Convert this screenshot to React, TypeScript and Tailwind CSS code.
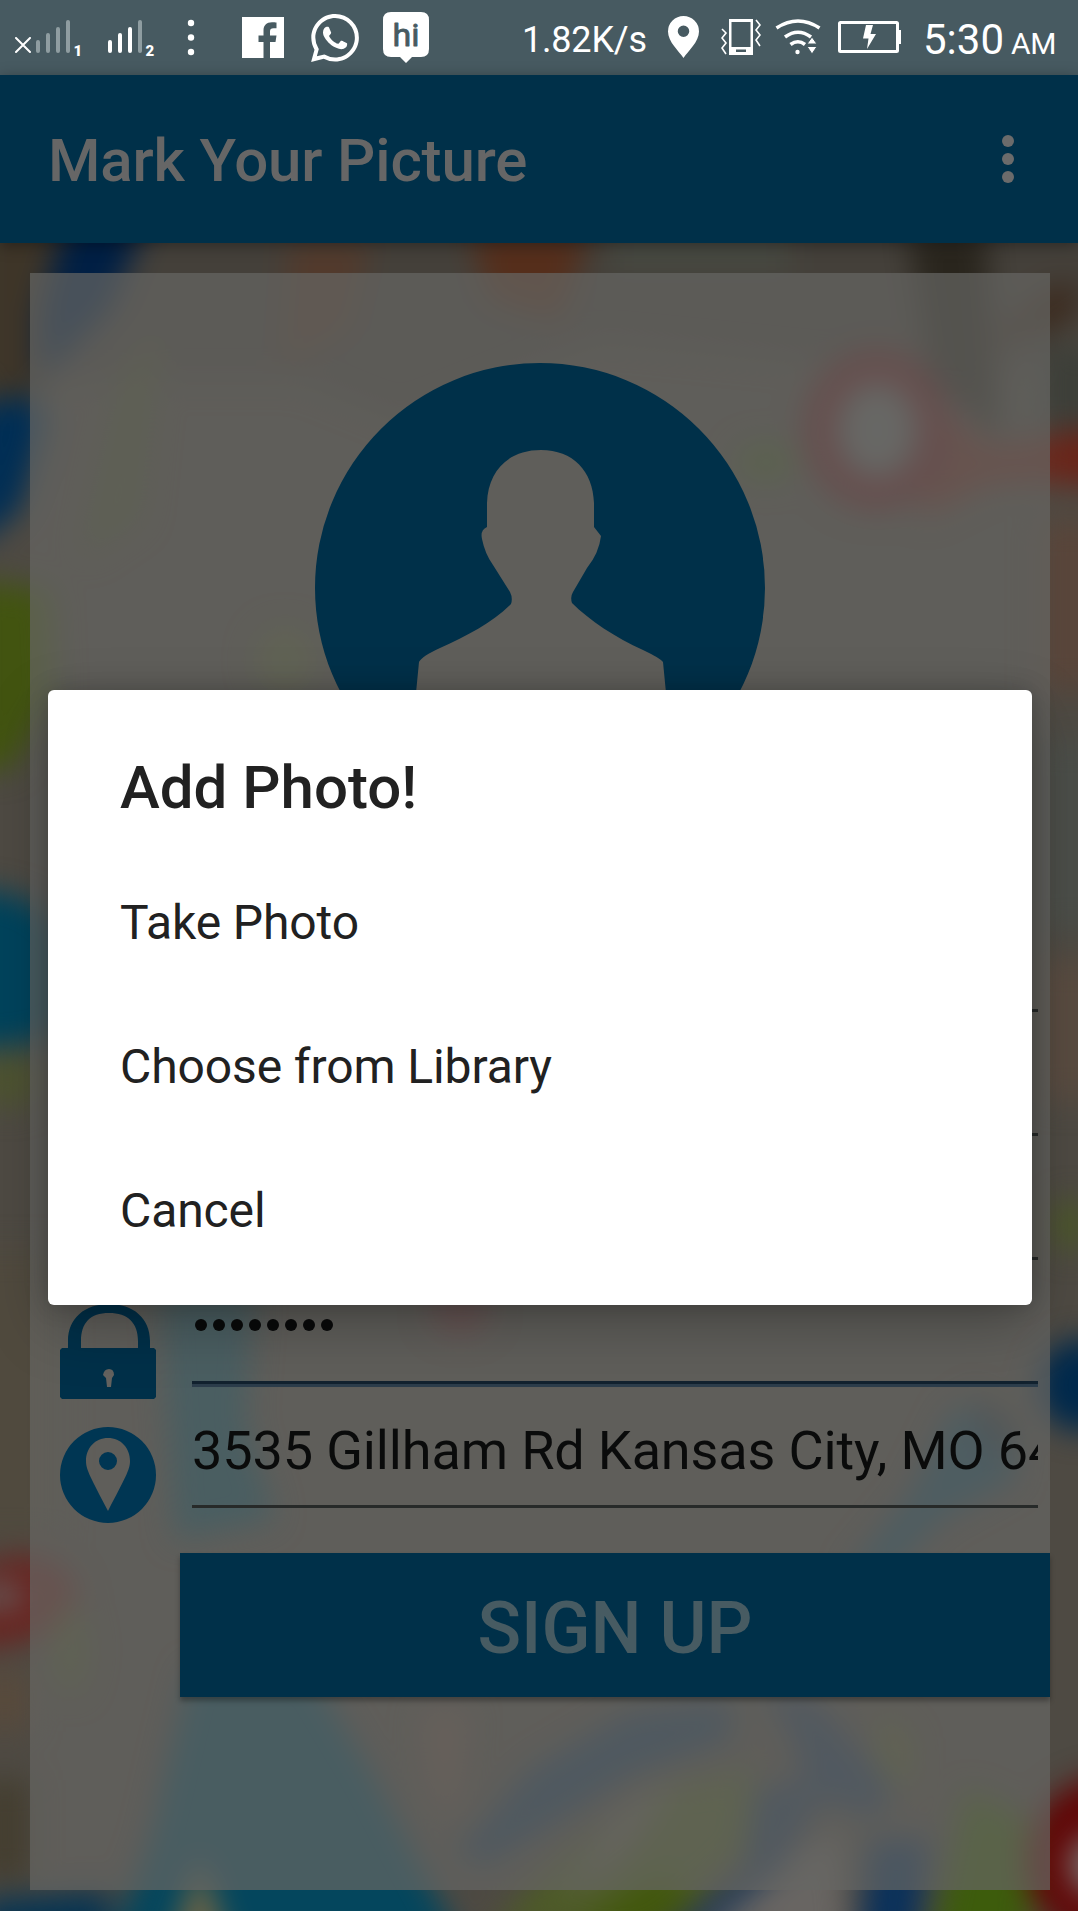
import React from "react";

function MapBackdrop() {
  return (
    <svg className="absolute inset-0 h-full w-full" viewBox="0 0 1078 1911" preserveAspectRatio="none">
      <defs>
        <filter id="soft" x="-20%" y="-20%" width="140%" height="140%" colorInterpolationFilters="sRGB">
          <feGaussianBlur stdDeviation="15" />
        </filter>
      </defs>
      <rect width="1078" height="1911" fill="#4e4a43" />
      <g filter="url(#soft)">
        <path d="M-40 200H1120V300L1000 380L600 340L400 420L300 380H-40Z" fill="#44403a" />
        <path d="M-20 220H60V350L40 400H-20Z" fill="#3e3528" />
        <path d="M72 200H155L110 310L40 380L40 310Z" fill="#001f44" />
        <path d="M-30 405L34 395L48 420L20 510L-30 550Z" fill="#002e55" />
        <path d="M120 380L160 330L140 520L80 560Z" fill="#4b5030" />
        <path d="M-30 580L50 590L55 700L10 770L-30 770Z" fill="#425410" />
        <path d="M290 240H370L350 330L280 370Z" fill="#523a2c" />
        <path d="M470 230H590L560 320L490 300Z" fill="#552e1b" />
        <path d="M610 230H790V270H610Z" fill="#474a42" />
        <path d="M908 230H985L1000 440L930 380Z" fill="#29251d" />
        <path d="M1078 280V320L980 350L1040 290Z" fill="#3d2c20" />
        <path d="M1040 345H1100V430H1040Z" fill="#3d3f39" />
        <path d="M940 405L990 445L1100 430V480L990 485L920 520Z" fill="#6a2a20" />
        <path d="M1058 430H1110V485H1058Z" fill="#6a2418" />
        <ellipse cx="877" cy="430" rx="57" ry="64" fill="#686a68" stroke="#65191c" strokeWidth="34" />
        <ellipse cx="766" cy="462" rx="30" ry="19" fill="#41581f" />
        <ellipse cx="285" cy="660" rx="30" ry="34" fill="#525a30" />
        <path d="M1040 520H1100V690H1040Z" fill="#59453a" />
        <path d="M1040 740H1100V930H1040Z" fill="#4b4e49" />
        <path d="M-40 890Q60 885 80 970T-40 1045Z" fill="#00435c" />
        <ellipse cx="8" cy="1080" rx="35" ry="28" fill="#4d5330" />
        <path d="M1040 960H1100V1100H1040Z" fill="#594b40" />
        <ellipse cx="1070" cy="1225" rx="18" ry="27" fill="#4b5728" />
        <path d="M-40 1250H60V1540H-40Z" fill="#504a3e" />
        <ellipse cx="460" cy="1310" rx="30" ry="24" fill="#69272a" />
        <path d="M160 1290H255L245 1420L275 1520L175 1540Z" fill="#074a5c" />
        <circle cx="1082" cy="1385" r="46" fill="#00294c" />
        <path d="M955 1405L1015 1440V1480L940 1520L890 1575L845 1575L910 1495Z" fill="#14475d" />
        <path d="M970 1390L1018 1430L990 1460Z" fill="#1c2e3b" />
        <path d="M-30 1570Q50 1535 75 1585T-30 1650Z" fill="#692420" />
        <ellipse cx="0" cy="1596" rx="25" ry="12" fill="#62605f" />
        <ellipse cx="70" cy="1650" rx="17" ry="45" fill="#4f592e" />
        <path d="M-20 1670H30V1730H-20Z" fill="#584a3c" />
        <path d="M-20 1780H30V1880H-20Z" fill="#443e30" />
        <path d="M190 1670H310L370 1770L470 1960H105L150 1840Z" fill="#04465d" />
        <path d="M-20 1900L110 1890V1950H-20Z" fill="#063452" />
        <path d="M200 1855L230 1950H170Z" fill="#706444" />
        <path d="M420 1710H470L455 1820L430 1790Z" fill="#665044" />
        <path d="M732 1700L730 1740L630 1775L560 1820L485 1865L455 1855L530 1770L630 1712Z" fill="#1a3a58" />
        <path d="M755 1770L745 1850L660 1930H490L560 1860L650 1790Z" fill="#4d5b26" />
        <path d="M680 1780L620 1860L560 1900L620 1810Z" fill="#626052" />
        <path d="M655 1870L700 1900L650 1940H570Z" fill="#42580c" />
        <path d="M760 1690L815 1700L890 1785L880 1820L820 1800L790 1850L740 1940H660L745 1870L755 1790L805 1780L790 1730Z" fill="#203a58" />
        <path d="M700 1940L800 1850L840 1830L850 1950Z" fill="#686562" />
        <path d="M870 1840H930L915 1950H860Z" fill="#0a315b" />
        <path d="M880 1710L910 1740V1790L880 1770Z" fill="#535b28" />
        <path d="M965 1790L1030 1820V1950H930Z" fill="#3d5c0c" />
        <circle cx="1110" cy="1860" r="84" fill="#610606" />
        <ellipse cx="1094" cy="1865" rx="25" ry="30" fill="#77706e" />
      </g>
    </svg>
  );
}

function SignalBars({ active, sim }: { active: boolean; sim: string }) {
  const on = active ? "#ffffff" : "#8f9da1";
  return (
    <svg className="h-[46px] w-[52px] shrink-0" viewBox="0 0 52 46">
      <g strokeWidth="4" strokeLinecap="round">
        <path d="M2 24V33M12 17V33M22 11V33" stroke={on} />
        <path d="M32 4V33" stroke="#8f9da1" />
      </g>
      <text x="37.500" y="38" fill="#fff" fontFamily="Roboto" fontWeight="900" fontSize="15">{sim}</text>
    </svg>
  );
}

function StatusBar() {
  return (
    <div className="flex h-[75px] items-start bg-[#475a61] pl-[15px] text-white">
      <svg className="mt-[37px] h-[17px] w-[17px] shrink-0" viewBox="0 0 17 17" stroke="#fff" strokeWidth="2" strokeLinecap="round">
        <path d="M1 1L15 15M15 1L1 15" />
      </svg>
      <div className="mt-[18px] ml-[4px]"><SignalBars active={false} sim="1" /></div>
      <div className="mt-[18px] ml-[20px]"><SignalBars active sim="2" /></div>
      <svg className="mt-[18px] ml-[27px] h-[40px] w-[8px] shrink-0" viewBox="0 0 8 40" fill="#fff">
        <circle cx="4" cy="5" r="3.2" /><circle cx="4" cy="19.5" r="3.2" /><circle cx="4" cy="34" r="3.2" />
      </svg>
      <svg className="mt-[17px] ml-[47px] h-[41px] w-[42px] shrink-0" viewBox="0 0 42 41">
        <path fill="#fff" d="M0 0H42V41H28V25H33.5L34.5 18.500H28V14.500C28 12.500 29 11.300 31.500 11.300H34.500V5.600C33.500 5.400 31.800 5.300 30 5.300C24.500 5.300 21.500 8.500 21.500 13.500V18.500H16.500V25H21.500V41H0Z" />
      </svg>
      <svg className="mt-[14px] ml-[27px] h-[48px] w-[48px] shrink-0" viewBox="0 0 24 24" fill="#fff">
        <path d="M17.472 14.382c-.297-.149-1.758-.867-2.03-.967-.273-.099-.471-.148-.67.15-.197.297-.767.966-.94 1.164-.173.199-.347.223-.644.075-.297-.15-1.255-.463-2.39-1.475-.883-.788-1.480-1.761-1.653-2.059-.173-.297-.018-.458.130-.606.134-.133.298-.347.446-.520.149-.174.198-.298.298-.497.099-.198.050-.371-.025-.520-.075-.149-.669-1.612-.916-2.207-.242-.579-.487-.500-.669-.510-.173-.008-.371-.010-.570-.010-.198 0-.520.074-.792.372-.272.297-1.040 1.016-1.040 2.479 0 1.462 1.065 2.875 1.213 3.074.149.198 2.096 3.200 5.077 4.487.709.306 1.262.489 1.694.625.712.227 1.360.195 1.871.118.571-.085 1.758-.719 2.006-1.413.248-.694.248-1.289.173-1.413-.074-.124-.272-.198-.570-.347M12.050 21.785h-.004a9.870 9.870 0 0 1-5.031-1.378l-.361-.214-3.741.982.998-3.648-.235-.374a9.860 9.860 0 0 1-1.510-5.260c.001-5.450 4.436-9.884 9.888-9.884a9.890 9.890 0 0 1 9.884 9.890c-.003 5.450-4.437 9.886-9.888 9.886m8.413-18.297A11.815 11.815 0 0 0 12.050 0C5.495 0 .160 5.335.157 11.892c0 2.096.547 4.142 1.588 5.945L.057 24l6.305-1.654a11.882 11.882 0 0 0 5.683 1.448h.005c6.554 0 11.890-5.335 11.893-11.893a11.821 11.821 0 0 0-3.480-8.413Z" />
      </svg>
      <svg className="mt-[12px] ml-[24px] h-[51px] w-[46px] shrink-0" viewBox="0 0 46 51">
        <path fill="#fff" d="M8 0H38Q46 0 46 8V37Q46 45 38 45H29L23 51L17 45H8Q0 45 0 37V8Q0 0 8 0Z" />
        <text x="9.500" y="34" fill="#475a61" stroke="#475a61" strokeWidth="0.800" strokeLinejoin="round" fontFamily="Roboto" fontWeight="400" fontSize="32" textLength="27" lengthAdjust="spacingAndGlyphs">hi</text>
      </svg>
      <span className="mt-[19px] ml-[93px] w-[126px] text-[36px] leading-[42px] tracking-[-0.2px] whitespace-nowrap">1.82K/s</span>
      <svg className="mt-[16px] ml-[20px] h-[42px] w-[31px] shrink-0" viewBox="0 0 31 42">
        <path fill="#fff" fillRule="evenodd" d="M15.500 0A15.500 15.500 0 0 1 31 15.500C31 26 20 35 15.500 42C11 35 0 26 0 15.500A15.500 15.500 0 0 1 15.500 0ZM15.500 9.500A5.700 5.700 0 1 0 15.500 21A5.700 5.700 0 1 0 15.500 9.500Z" />
      </svg>
      <svg className="mt-[18px] ml-[22px] h-[38px] w-[40px] shrink-0" viewBox="0 0 40 38">
        <path fill="#fff" fillRule="evenodd" d="M8 1H32V37H8ZM10.500 4V29H29.500V4ZM15 31.500V34H25V31.500Z" />
        <path fill="none" stroke="#fff" strokeWidth="1.600" d="M1 11L5 15L1 20L5 25L1 30L5 36M35 2L39 7L35 12L39 17L35 22L39 28" />
      </svg>
      <svg className="mt-[19px] ml-[14px] h-[36px] w-[47px] shrink-0" viewBox="0 0 47 36" fill="none" stroke="#fff" strokeWidth="3.600">
        <path d="M1.500 9Q23 -5 44.500 9M10 18Q23 8.500 36 18M15.500 25.500Q23 20 30 25.500" />
        <circle cx="22.500" cy="33" r="2.200" fill="#fff" stroke="none" />
        <path fill="#fff" stroke="#475a61" strokeWidth="1" d="M32 25L37 18L42 25ZM32 27.500H42L37 35Z" />
      </svg>
      <svg className="mt-[21px] ml-[16px] h-[32px] w-[63px] shrink-0" viewBox="0 0 63 32">
        <rect x="1.500" y="1.500" width="58" height="29" rx="1" fill="none" stroke="#fff" strokeWidth="3" />
        <path fill="#fff" d="M60 9H63V23H60ZM28 4H35L32.500 13H38L29 28L30.500 17.500H25Z" />
      </svg>
      <span className="mt-[15px] ml-[22px] text-[42px] leading-[50px] whitespace-nowrap">5:30</span>
      <span className="mt-[26px] ml-[7px] text-[30px] leading-[35px] tracking-[-0.3px] whitespace-nowrap">AM</span>
    </div>
  );
}

function AppBar() {
  return (
    <header className="relative flex h-[168px] items-center justify-between bg-[#003049] pr-[64px] pl-[48px] shadow-[0_3px_14px_rgba(0,0,0,0.35)]">
      <h1 className="pt-1 text-[60px] leading-[70px] font-medium tracking-[-0.14px] text-[#666666]">Mark Your Picture</h1>
      <div className="flex flex-col gap-[6px]">
        <i className="h-3 w-3 rounded-full bg-[#6b6b6b]" />
        <i className="h-3 w-3 rounded-full bg-[#6b6b6b]" />
        <i className="h-3 w-3 rounded-full bg-[#6b6b6b]" />
      </div>
    </header>
  );
}

function Avatar() {
  return (
    <svg className="mx-auto block h-[450px] w-[450px]" viewBox="0 0 450 450">
      <path fill="#003049" fillRule="evenodd" d="M225 0A225 225 0 1 1 225 450A225 225 0 1 1 225 0ZM226 87C193 87 173 108 172 140V164Q165 167 167 176Q170 191 178 202L195 229Q198 235 196 241C178 259 152 273 125 285Q107 293 104 299L100 340V400H352V340L348 299Q345 295 328 287C301 275 274 257 257 240Q255 234 258 229L272 205Q284 190 286 173L279 164V140C278 108 258 87 226 87Z" />
    </svg>
  );
}

function LockIcon() {
  return (
    <svg className="h-24 w-24" viewBox="0 0 96 96">
      <path fill="#003049" fillRule="evenodd" d="M8 45V38C8 15 25 1 49 1S90 15 90 38V45H94L96 47V94L94 96H2L0 94V47L2 45ZM21 45H78V38C78 20 68 10 49 10S21 20 21 38Z" />
      <path fill="#64625f" d="M43 72Q44 66 49 66T54 72L52 75L51 84H47L46 75Z" />
    </svg>
  );
}

function PlaceIcon() {
  return (
    <svg className="h-24 w-24" viewBox="0 0 96 96">
      <path fill="#003653" fillRule="evenodd" d="M48 0A48 48 0 1 1 48 96A48 48 0 1 1 48 0ZM48 11C35 11 26 21 26 34C26 43 31 51 48 84C65 51 70 43 70 34C70 21 61 11 48 11ZM48 25A9 9 0 1 1 48 43A9 9 0 1 1 48 25Z" />
    </svg>
  );
}

function Field({ icon, children, focused = false }: { icon?: React.ReactNode; children?: React.ReactNode; focused?: boolean }) {
  return (
    <div className="flex h-[124px] pl-[30px]">
      <div className="mt-[31px] h-24 w-24 shrink-0">{icon}</div>
      <div className="ml-9 w-[846px] pt-[15px]">
        <div className="h-[94px] overflow-hidden text-[54px] leading-[80px] tracking-[-0.13px] whitespace-nowrap text-[#0a0b0b]">{children}</div>
        {focused ? (
          <div className="h-[6px] border-t-[3px] border-[#12222f] bg-[#2c3d4b]" />
        ) : (
          <div className="h-[3px] bg-[#272a29]" />
        )}
      </div>
    </div>
  );
}

function PasswordDots() {
  return (
    <div className="flex gap-[6px] pt-[32px] pl-[3px]">
      {Array.from({ length: 8 }, (_, i) => <i key={i} className="h-3 w-3 rounded-full bg-[#0a0b0b]" />)}
    </div>
  );
}

function PhotoDialog() {
  return (
    <section className="absolute top-[690px] left-[48px] flex h-[615px] w-[984px] flex-col rounded-[6px] bg-white pt-[61px] pl-[72px] text-[#212121] shadow-[0_20px_60px_rgba(0,0,0,0.26),0_0_24px_rgba(0,0,0,0.2)]">
      <h2 className="h-[100px] text-[60px] leading-[74px] font-medium">Add Photo!</h2>
      <button className="h-[144px] text-left text-[48px] tracking-[-0.1px]">Take Photo</button>
      <button className="h-[144px] text-left text-[48px] tracking-[-0.1px]">Choose from Library</button>
      <button className="h-[144px] text-left text-[48px] tracking-[-0.1px]">Cancel</button>
    </section>
  );
}

export default function App() {
  return (
    <div className="relative h-[1911px] w-[1078px] overflow-hidden font-['Roboto',sans-serif]">
      <MapBackdrop />
      <div className="relative flex h-full flex-col">
        <StatusBar />
        <AppBar />
        <main className="mx-[30px] mt-[30px] h-[1617px] w-[1020px] bg-[#666664]/70 pt-[90px]">
          <Avatar />
          <div className="mt-[87px]">
            <Field />
            <Field />
            <Field />
            <Field icon={<LockIcon />} focused><PasswordDots /></Field>
            <Field icon={<PlaceIcon />}>3535 Gillham Rd Kansas City, MO 64</Field>
          </div>
          <button className="mt-[33px] ml-[150px] h-[144px] w-[870px] bg-[#003049] pt-[7px] text-[72px] leading-none font-medium text-[#475b62] shadow-[0_4px_5px_rgba(0,0,0,0.3)]">SIGN UP</button>
        </main>
      </div>
      <PhotoDialog />
    </div>
  );
}
